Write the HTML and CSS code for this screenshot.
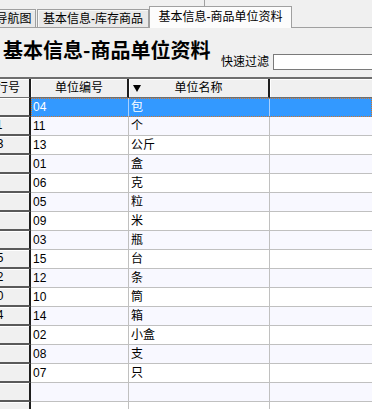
FILE: index.html
```html
<!DOCTYPE html>
<html lang="zh-CN">
<head>
<meta charset="utf-8">
<title>基本信息-商品单位资料</title>
<link rel="stylesheet" href="styles.css">
</head>
<body>
<div class="tabbar">
  <div class="tab t1">导航图</div>
  <div class="tab t2">基本信息-库存商品</div>
  <div class="tab active">基本信息-商品单位资料</div>
</div>
<div class="head">
  <div class="title">基本信息-商品单位资料</div>
  <div class="filter"><span class="flabel">快速过滤</span><span class="finput"></span></div>
</div>
<div class="grid">
  <div class="row hdr"><div class="rh">行号</div><div class="c">单位编号</div><div class="c c2"><span class="arrow"></span>单位名称</div><div class="c"></div></div>
  <div class="row sel"><div class="rh">4</div><div class="c">04</div><div class="c">包</div><div class="c"></div></div>
  <div class="row alt"><div class="rh">11</div><div class="c">11</div><div class="c">个</div><div class="c"></div></div>
  <div class="row"><div class="rh">13</div><div class="c">13</div><div class="c">公斤</div><div class="c"></div></div>
  <div class="row alt"><div class="rh">1</div><div class="c">01</div><div class="c">盒</div><div class="c"></div></div>
  <div class="row"><div class="rh">6</div><div class="c">06</div><div class="c">克</div><div class="c"></div></div>
  <div class="row alt"><div class="rh">5</div><div class="c">05</div><div class="c">粒</div><div class="c"></div></div>
  <div class="row"><div class="rh">9</div><div class="c">09</div><div class="c">米</div><div class="c"></div></div>
  <div class="row alt"><div class="rh">3</div><div class="c">03</div><div class="c">瓶</div><div class="c"></div></div>
  <div class="row"><div class="rh">15</div><div class="c">15</div><div class="c">台</div><div class="c"></div></div>
  <div class="row alt"><div class="rh">12</div><div class="c">12</div><div class="c">条</div><div class="c"></div></div>
  <div class="row"><div class="rh">10</div><div class="c">10</div><div class="c">筒</div><div class="c"></div></div>
  <div class="row alt"><div class="rh">14</div><div class="c">14</div><div class="c">箱</div><div class="c"></div></div>
  <div class="row"><div class="rh">2</div><div class="c">02</div><div class="c">小盒</div><div class="c"></div></div>
  <div class="row alt"><div class="rh">8</div><div class="c">08</div><div class="c">支</div><div class="c"></div></div>
  <div class="row"><div class="rh">7</div><div class="c">07</div><div class="c">只</div><div class="c"></div></div>
  <div class="row alt"><div class="rh"></div><div class="c"></div><div class="c"></div><div class="c"></div></div>
  <div class="row"><div class="rh"></div><div class="c"></div><div class="c"></div><div class="c"></div></div>
</div>
</body>
</html>
```
FILE: styles.css
```css
html, body {
  margin: 0;
  padding: 0;
}
body {
  width: 372px;
  height: 409px;
  overflow: hidden;
  background: #f0f0f0;
  font-family: "Liberation Sans", "Noto Sans CJK SC", sans-serif;
  font-size: 12px;
  color: #000;
}

/* tabs */
.tabbar {
  position: relative;
  height: 28px;
  box-sizing: border-box;
  border-bottom: 1px solid #a0a0a0;
  display: flex;
  align-items: flex-end;
}
.tabbar::before {
  content: "";
  position: absolute;
  left: 204px;
  top: 0;
  width: 1px;
  height: 6px;
  background: #a0a0a0;
}
.tab {
  height: 18px;
  box-sizing: border-box;
  border: 1px solid #a0a0a0;
  border-bottom: none;
  background: #e9e9e9;
  box-shadow: inset 1px 1px 0 #f8f8f8;
  display: flex;
  align-items: center;
  justify-content: center;
  white-space: nowrap;
  overflow: hidden;
  line-height: 16px;
}
.t1 {
  width: 45px;
  margin-left: -9px;
  margin-right: 1px;
}
.t2 {
  width: 112px;
}
.active {
  width: 143px;
  height: 22px;
  margin-bottom: -1px;
  background: #fcfcfc;
  box-shadow: none;
  padding-bottom: 2px;
}

/* heading */
.head {
  height: 49px;
  display: flex;
  align-items: flex-start;
}
.title {
  flex: 0 0 221px;
  box-sizing: border-box;
  padding-left: 3px;
  margin-top: 12px;
  font-size: 20px;
  line-height: 20px;
  font-weight: 700;
  font-family: "Noto Sans CJK SC", sans-serif;
  white-space: nowrap;
}
.filter {
  margin-top: 26px;
  height: 16px;
  display: flex;
  align-items: center;
  gap: 4px;
}
.flabel {
  line-height: 16px;
  white-space: nowrap;
}
.finput {
  width: 110px;
  height: 16px;
  box-sizing: border-box;
  border: 1px solid #7a7a7a;
  background: #fff;
}

/* grid */
.grid {
  border-top: 2px solid #6e6e6e;
}
.row {
  position: relative;
  display: grid;
  grid-template-columns: 31px 98px 141px 110px;
  height: 19px;
}
.rh {
  box-sizing: border-box;
  background: #f0f0f0;
  border-right: 2px solid #1e1e1e;
  border-bottom: 2px solid #5a5a5a;
  box-shadow: inset 0 1px 0 #ffffff;
  overflow: hidden;
  white-space: nowrap;
  text-indent: -10px;
  line-height: 17px;
}
.c {
  box-sizing: border-box;
  border-right: 1px solid #c0c0c0;
  border-bottom: 1px solid #c0c0c0;
  background: #fff;
  padding-left: 2px;
  line-height: 18px;
  overflow: hidden;
  white-space: nowrap;
}
.alt .c {
  background: #f8f8ff;
}

.hdr {
  height: 19px;
}
.hdr .rh {
  text-indent: -4px;
  border-bottom: 1px solid #6e6e6e;
  line-height: 18px;
}
.hdr .c {
  background: #f0f0f0;
  border-right: 2px solid #1e1e1e;
  border-bottom: 1px solid #6e6e6e;
  box-shadow: inset 1px 1px 0 #ffffff;
  text-align: center;
  padding-left: 0;
  position: relative;
}
.hdr .c:last-child {
  border-right: none;
}
.arrow {
  position: absolute;
  left: 4px;
  top: 6px;
  width: 0;
  height: 0;
  border-left: 4px solid transparent;
  border-right: 4px solid transparent;
  border-top: 7px solid #000;
}

.sel .c {
  background: #3399ff;
  color: #fff;
  border-right-color: #a9d1ff;
  border-bottom-color: #3399ff;
}
.sel::after {
  content: "";
  position: absolute;
  left: 31px;
  top: 0;
  right: 0;
  height: 19px;
  box-sizing: border-box;
  border: 1px dotted #d2762a;
  pointer-events: none;
}
```
